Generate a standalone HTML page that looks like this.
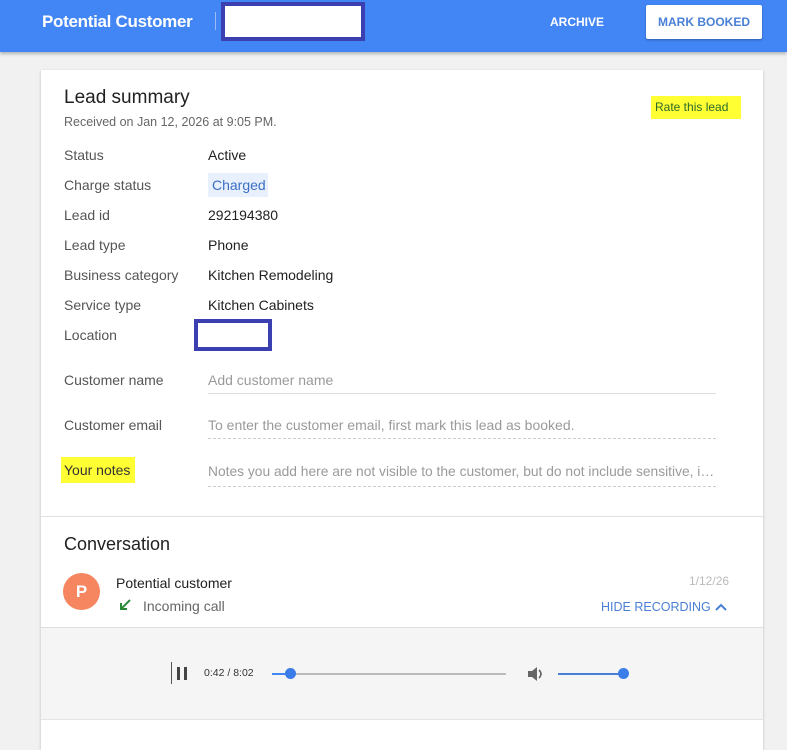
<!DOCTYPE html>
<html><head><meta charset="utf-8"><style>
*{margin:0;padding:0;box-sizing:border-box}
body{width:787px;height:733px;background:#f1f1f1;font-family:"Liberation Sans",sans-serif;position:relative;overflow:hidden;color:#212121}
.a{position:absolute;white-space:nowrap}
.hdr{position:absolute;left:0;top:0;width:787px;height:52px;background:#4285f4;box-shadow:0 2px 3px rgba(0,0,0,.25)}
.card{position:absolute;left:41px;top:70px;width:722px;height:680px;background:#fff;box-shadow:0 1px 3px rgba(0,0,0,.2)}
.l{font-size:14px;color:#555}
.v{font-size:14px;color:#212121}
.p{font-size:14px;color:#9a9a9a}
</style></head><body>
<div class="hdr"></div>
<div class="a" style="left:42px;top:11px;font-size:17px;font-weight:bold;color:#fff;line-height:22px;letter-spacing:-0.3px">Potential Customer</div>
<div class="a" style="left:215px;top:12px;width:1px;height:18px;background:#9dbcf7"></div>
<div class="a" style="left:221px;top:2px;width:144px;height:39px;border:4px solid #3b3fb0;background:#fff"></div>
<div class="a" style="left:550px;top:15px;font-size:12px;font-weight:bold;color:#fff">ARCHIVE</div>
<div class="a" style="left:646px;top:5px;width:116px;height:34px;background:#fff;border-radius:2px;box-shadow:0 1px 2px rgba(0,0,0,.3)"></div>
<div class="a" style="left:658px;top:15px;font-size:12px;font-weight:bold;color:#4a7fd6">MARK BOOKED</div>
<div class="card"></div>
<div class="a" style="left:64px;top:87px;font-size:19px;color:#212121">Lead summary</div>
<div class="a" style="left:64px;top:115px;font-size:12.5px;color:#666">Received on Jan 12, 2026 at 9:05 PM.</div>
<div class="a" style="left:651px;top:96px;width:90px;height:23px;background:#ffff33"></div>
<div class="a" style="left:655px;top:100px;font-size:12px;color:#2a6a2a">Rate this lead</div>
<div class="a l" style="left:64px;top:147px">Status</div><div class="a v" style="left:208px;top:147px">Active</div>
<div class="a l" style="left:64px;top:177px">Charge status</div>
<div class="a" style="left:208px;top:173px;width:60px;height:24px;background:#e8f0fe"></div>
<div class="a v" style="left:212px;top:177px;color:#3b6fc4">Charged</div>
<div class="a l" style="left:64px;top:207px">Lead id</div><div class="a v" style="left:208px;top:207px">292194380</div>
<div class="a l" style="left:64px;top:237px">Lead type</div><div class="a v" style="left:208px;top:237px">Phone</div>
<div class="a l" style="left:64px;top:267px">Business category</div><div class="a v" style="left:208px;top:267px">Kitchen Remodeling</div>
<div class="a l" style="left:64px;top:297px">Service type</div><div class="a v" style="left:208px;top:297px">Kitchen Cabinets</div>
<div class="a l" style="left:64px;top:327px">Location</div>
<div class="a" style="left:194px;top:319px;width:78px;height:32px;border:4px solid #3b3fb0;background:#fff"></div>
<div class="a l" style="left:64px;top:372px">Customer name</div><div class="a p" style="left:208px;top:372px">Add customer name</div>
<div class="a" style="left:208px;top:393px;width:508px;border-top:1px solid #ddd"></div>
<div class="a l" style="left:64px;top:417px">Customer email</div><div class="a p" style="left:208px;top:417px">To enter the customer email, first mark this lead as booked.</div>
<div class="a" style="left:208px;top:438px;width:508px;border-top:1px dashed #ccc"></div>
<div class="a" style="left:61px;top:457px;width:74px;height:26px;background:#ffff33"></div>
<div class="a l" style="left:64px;top:462px;color:#333">Your notes</div>
<div class="a p" style="left:208px;top:464px;width:508px;overflow:hidden;text-overflow:ellipsis;font-size:13.8px">Notes you add here are not visible to the customer, but do not include sensitive, information</div>
<div class="a" style="left:208px;top:486px;width:508px;border-top:1px dashed #ccc"></div>
<div class="a" style="left:41px;top:516px;width:722px;border-top:1px solid #e0e0e0"></div>
<div class="a" style="left:64px;top:534px;font-size:18px">Conversation</div>
<div class="a" style="left:63px;top:573px;width:37px;height:37px;border-radius:50%;background:#f5865f;color:#fff;font-size:17px;font-weight:bold;text-align:center;line-height:37px">P</div>
<div class="a v" style="left:116px;top:575px">Potential customer</div>
<svg class="a" style="left:118px;top:598px" width="14" height="14"><path d="M12 2 L3 11 M3 5 V11 H9" stroke="#2a8a3a" stroke-width="2" fill="none"/></svg>
<div class="a" style="left:143px;top:598px;font-size:14px;color:#666">Incoming call</div>
<div class="a" style="left:689px;top:574px;font-size:12px;color:#bbb">1/12/26</div>
<div class="a" style="left:601px;top:600px;font-size:12.5px;color:#4a7fd6">HIDE RECORDING</div>
<svg class="a" style="left:714px;top:601px" width="14" height="12"><path d="M2 9 L7 4 L12 9" stroke="#4a7fd6" stroke-width="2" fill="none"/></svg>
<div class="a" style="left:41px;top:627px;width:722px;height:93px;background:#f5f5f5;border-top:1px solid #ddd;border-bottom:1px solid #e4e4e4"></div>
<div class="a" style="left:171px;top:662px;width:1px;height:22px;background:#555"></div>
<div class="a" style="left:177px;top:667px;width:3px;height:13px;background:#444"></div>
<div class="a" style="left:184px;top:667px;width:3px;height:13px;background:#444"></div>
<div class="a" style="left:204px;top:667px;font-size:10.5px;color:#333">0:42 / 8:02</div>
<div class="a" style="left:272px;top:673px;width:234px;height:2px;background:#bbb"></div>
<div class="a" style="left:272px;top:673px;width:18px;height:2px;background:#4285f4"></div>
<div class="a" style="left:285px;top:668px;width:11px;height:11px;border-radius:50%;background:#3b7de8"></div>
<svg class="a" style="left:527px;top:665px" width="18" height="18" viewBox="0 0 18 18"><path d="M1 6h4l5-4v14l-5-4H1z" fill="#666"/><path d="M12 5q4 4 0 8" stroke="#666" stroke-width="1.6" fill="none"/></svg>
<div class="a" style="left:558px;top:673px;width:66px;height:2px;background:#4a7fd6"></div>
<div class="a" style="left:618px;top:668px;width:11px;height:11px;border-radius:50%;background:#3b7de8"></div>
</body></html>
